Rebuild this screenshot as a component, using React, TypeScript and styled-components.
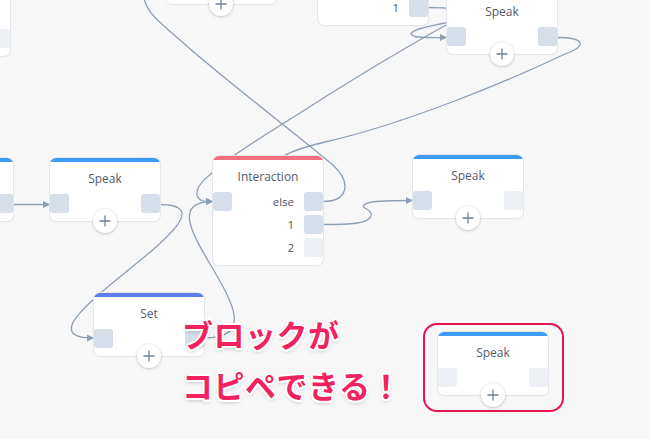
import React from 'react';
import styled, { createGlobalStyle } from 'styled-components';

const GlobalStyle = createGlobalStyle`
  html, body { margin: 0; padding: 0; background: #f7f7f7; }
  body { font-family: "Open Sans", "Noto Sans", sans-serif; }
`;

const Canvas = styled.div`
  position: relative;
  width: 650px;
  height: 439px;
  overflow: hidden;
  background: #f7f7f7;
`;

const Wires = styled.svg`
  position: absolute;
  left: 0;
  top: 0;
  width: 650px;
  height: 439px;
`;

const Wire = styled.path`
  fill: none;
  stroke: #8c9fb5;
  stroke-width: 1.3;
`;

const Placed = styled.div<{ $x: number; $y: number }>`
  position: absolute;
  left: ${(p) => p.$x}px;
  top: ${(p) => p.$y}px;
`;

const NodeBox = styled.div`
  position: relative;
  width: 110px;
`;

const Card = styled.div`
  background: #fff;
  border-radius: 6px;
  box-shadow: 0 0 0 1px #e3e7ec, 0 1px 2px rgba(30, 40, 60, 0.06);
  overflow: hidden;
  padding-bottom: 8px;
`;

const Bar = styled.div<{ $color: string }>`
  height: 4px;
  background: ${(p) => p.$color};
`;

const Title = styled.div`
  padding-top: 9px;
  margin-bottom: 7px;
  height: 16px;
  line-height: 16px;
  font-size: 12px;
  color: #535b6b;
  text-align: center;
`;

const Rows = styled.div`
  display: flex;
  flex-direction: column;
  gap: 4px;
`;

const Row = styled.div`
  display: flex;
  align-items: center;
  height: 19px;
`;

const Spacer = styled.div`
  flex: 1;
`;

const Port = styled.div<{ $on: boolean }>`
  width: 19px;
  height: 19px;
  border-radius: 3px;
  background: ${(p) => (p.$on ? '#d6dfe9' : '#edf1f6')};
`;

const Label = styled.span`
  font-size: 11.5px;
  color: #4e5667;
  margin-right: 10px;
`;

const AddButton = styled.div`
  position: absolute;
  left: 50%;
  bottom: -12px;
  transform: translateX(-50%);
  width: 24px;
  height: 24px;
  border-radius: 50%;
  background: #fff;
  box-shadow: 0 1px 3px rgba(30, 40, 60, 0.2), 0 0 0 1px rgba(30, 40, 60, 0.04);
  display: flex;
  align-items: center;
  justify-content: center;
`;

const CopyFrame = styled.div`
  box-sizing: border-box;
  width: 141px;
  height: 89px;
  border: 2px solid #e8144f;
  border-radius: 14px;
  padding: 7px 0 0 13px;
`;

const Caption = styled.div`
  font-family: "Noto Sans CJK JP", "Noto Sans", sans-serif;
  font-weight: 700;
  font-size: 31px;
  letter-spacing: 0.5px;
  line-height: 51px;
  color: #f2225e;
  white-space: nowrap;
  text-shadow: 2px 0 0 #fff, -2px 0 0 #fff, 0 2px 0 #fff, 0 -2px 0 #fff,
    1.5px 1.5px 0 #fff, -1.5px -1.5px 0 #fff, 1.5px -1.5px 0 #fff,
    -1.5px 1.5px 0 #fff, 0 2px 4px rgba(0, 0, 0, 0.3);
`;

type RowData = { label?: string; left?: boolean; right?: boolean };

const PlusIcon = () => (
  <svg width="12" height="12" viewBox="0 0 12 12">
    <path d="M6 0.5 V11.5 M0.5 6 H11.5" stroke="#6e8096" strokeWidth="1.3" fill="none" />
  </svg>
);

const Node: React.FC<{
  title?: string;
  color: string;
  rows: RowData[];
  add?: boolean;
}> = ({ title, color, rows, add }) => (
  <NodeBox>
    <Card>
      <Bar $color={color} />
      <Title>{title}</Title>
      <Rows>
        {rows.map((r, i) => (
          <Row key={i}>
            {r.left !== undefined && <Port $on={r.left} />}
            <Spacer />
            {r.label && <Label>{r.label}</Label>}
            {r.right !== undefined && <Port $on={r.right} />}
          </Row>
        ))}
      </Rows>
    </Card>
    {add && (
      <AddButton>
        <PlusIcon />
      </AddButton>
    )}
  </NodeBox>
);

const BLUE = '#3d9cf5';
const RED = '#f36e7e';
const INDIGO = '#5b7ee8';

export default function App() {
  return (
    <>
      <GlobalStyle />
      <Canvas>
        <Wires viewBox="0 0 650 439">
          <defs>
            <marker
              id="arrow"
              viewBox="0 0 8 8"
              refX="8"
              refY="4"
              markerWidth="8"
              markerHeight="7"
              markerUnits="userSpaceOnUse"
              orient="auto"
            >
              <path d="M0,0 L8,4 L0,8 z" fill="#8c9fb5" />
            </marker>
          </defs>
          <Wire d="M 13 204.5 L 50 204.5" markerEnd="url(#arrow)" />
          <Wire d="M 159 204.5 C 259 204.5, -5 338, 94 338" markerEnd="url(#arrow)" />
          <Wire d="M 204 338 C 300 338, 130 201.5, 213 201.5" markerEnd="url(#arrow)" />
          <Wire d="M 323 224.5 C 350 224.5, 368 224, 371 216 C 373 209, 360 208, 364 205 C 368 201, 385 200.5, 413 200.5" markerEnd="url(#arrow)" />
          <Wire d="M 323 201.5 C 348 201.5, 352 183, 333 165 C 300 137, 215 72, 180 40 C 160 22, 143 12, 143 -10" />
          <Wire d="M 557 37.5 C 585 37.5, 588 46, 565 54 C 500 85, 400 125, 325 142 C 290 150, 270 160, 262 175" />
          <Wire d="M 470 12 C 440 28, 400 50, 325 97 C 290 120, 250 143, 228 160 C 210 174, 195 185, 197 195 C 199 201, 203 201.5, 213 201.5" markerEnd="url(#arrow)" />
          <Wire d="M 428 7.5 C 475 7.5, 470 18, 440 24 C 415 29, 405 33, 415 36.5 C 422 38, 432 37.5, 447 37.5" markerEnd="url(#arrow)" />
        </Wires>

        <Placed $x={-100} $y={-7}>
          <Node color={BLUE} rows={[{ left: true, right: false }]} add />
        </Placed>
        <Placed $x={166} $y={-59}>
          <Node color={BLUE} rows={[{ left: true, right: true }]} add />
        </Placed>
        <Placed $x={318} $y={-61}>
          <Node
            color={RED}
            rows={[{ left: true, right: true }, { label: '1', right: true }]}
          />
        </Placed>
        <Placed $x={447} $y={-9}>
          <Node title="Speak" color={BLUE} rows={[{ left: true, right: true }]} add />
        </Placed>
        <Placed $x={-97} $y={158}>
          <Node color={BLUE} rows={[{ left: true, right: true }]} add />
        </Placed>
        <Placed $x={50} $y={158}>
          <Node title="Speak" color={BLUE} rows={[{ left: true, right: true }]} add />
        </Placed>
        <Placed $x={213} $y={156}>
          <Node
            title="Interaction"
            color={RED}
            rows={[
              { left: true, label: 'else', right: true },
              { label: '1', right: true },
              { label: '2', right: false },
            ]}
          />
        </Placed>
        <Placed $x={413} $y={155}>
          <Node title="Speak" color={BLUE} rows={[{ left: true, right: false }]} add />
        </Placed>
        <Placed $x={94} $y={293}>
          <Node title="Set" color={INDIGO} rows={[{ left: true, right: true }]} add />
        </Placed>
        <Placed $x={423} $y={323}>
          <CopyFrame>
            <Node title="Speak" color={BLUE} rows={[{ left: false, right: false }]} add />
          </CopyFrame>
        </Placed>

        <Placed $x={182} $y={308}>
          <Caption>
            ブロックが
            <br />
            コピペできる！
          </Caption>
        </Placed>
      </Canvas>
    </>
  );
}
